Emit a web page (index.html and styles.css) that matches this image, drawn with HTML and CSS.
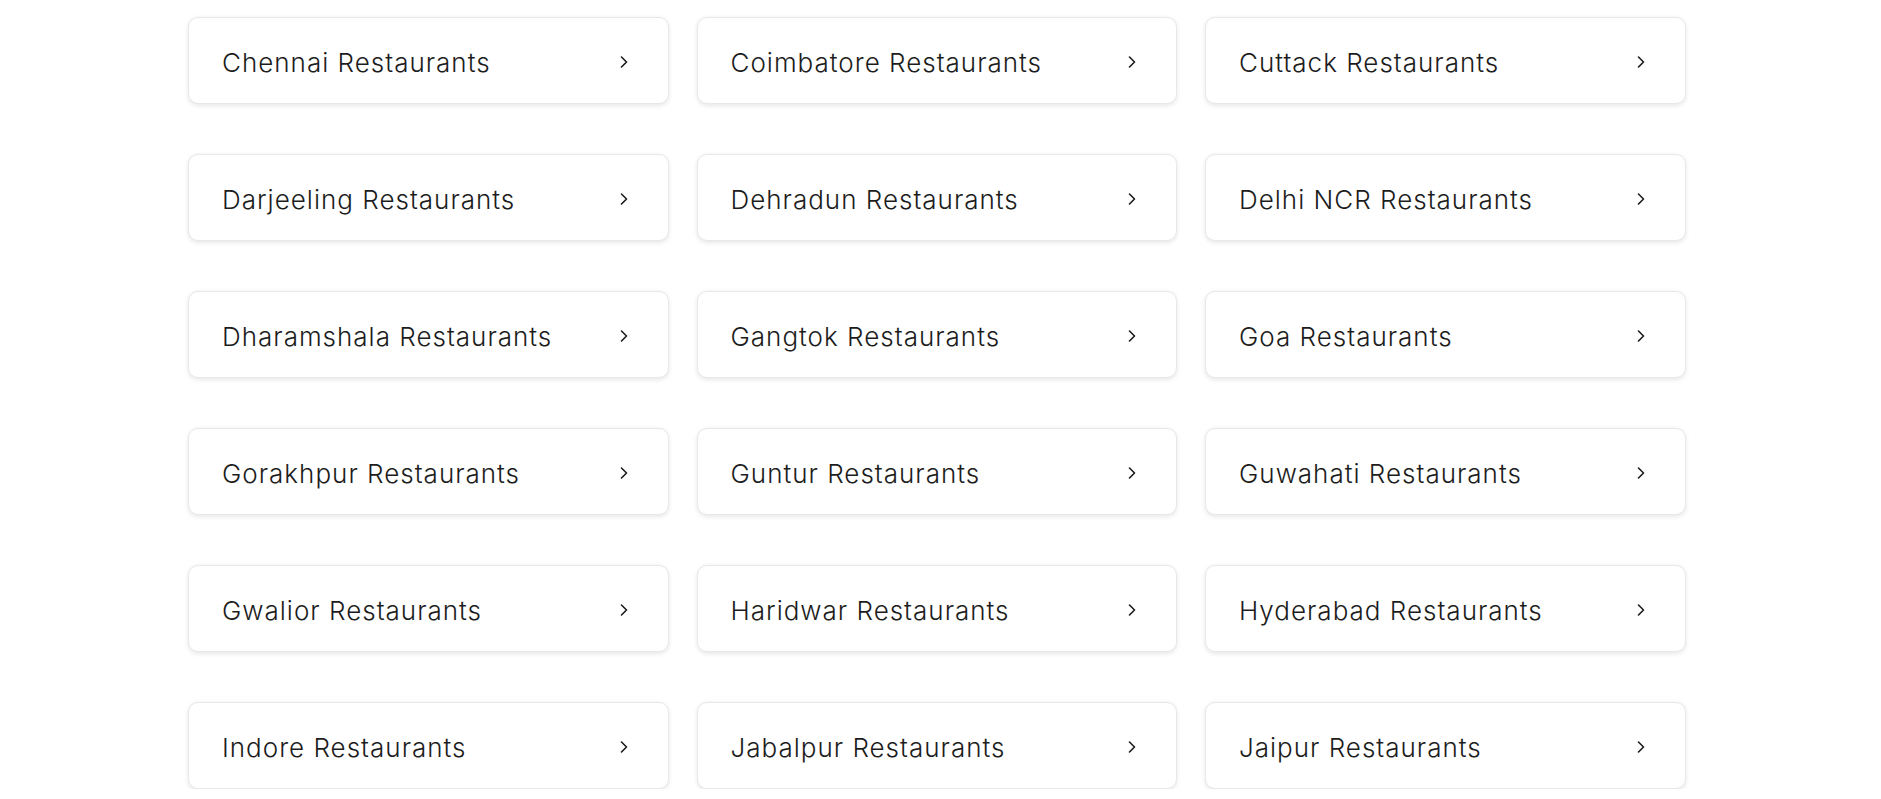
FILE: index.html
```html
<!DOCTYPE html>
<html lang="en">
<head>
<meta charset="utf-8">
<title>Restaurants</title>
<link rel="stylesheet" href="styles.css">
</head>
<body>
<div class="grid">
  <a class="card" href="#"><span class="label">Chennai Restaurants</span><svg class="chev" viewBox="0 0 8 12"><polyline points="1.5,1 6.5,6 1.5,11"/></svg></a>
  <a class="card" href="#"><span class="label">Coimbatore Restaurants</span><svg class="chev" viewBox="0 0 8 12"><polyline points="1.5,1 6.5,6 1.5,11"/></svg></a>
  <a class="card" href="#"><span class="label">Cuttack Restaurants</span><svg class="chev" viewBox="0 0 8 12"><polyline points="1.5,1 6.5,6 1.5,11"/></svg></a>
  <a class="card" href="#"><span class="label">Darjeeling Restaurants</span><svg class="chev" viewBox="0 0 8 12"><polyline points="1.5,1 6.5,6 1.5,11"/></svg></a>
  <a class="card" href="#"><span class="label">Dehradun Restaurants</span><svg class="chev" viewBox="0 0 8 12"><polyline points="1.5,1 6.5,6 1.5,11"/></svg></a>
  <a class="card" href="#"><span class="label">Delhi NCR Restaurants</span><svg class="chev" viewBox="0 0 8 12"><polyline points="1.5,1 6.5,6 1.5,11"/></svg></a>
  <a class="card" href="#"><span class="label">Dharamshala Restaurants</span><svg class="chev" viewBox="0 0 8 12"><polyline points="1.5,1 6.5,6 1.5,11"/></svg></a>
  <a class="card" href="#"><span class="label">Gangtok Restaurants</span><svg class="chev" viewBox="0 0 8 12"><polyline points="1.5,1 6.5,6 1.5,11"/></svg></a>
  <a class="card" href="#"><span class="label">Goa Restaurants</span><svg class="chev" viewBox="0 0 8 12"><polyline points="1.5,1 6.5,6 1.5,11"/></svg></a>
  <a class="card" href="#"><span class="label">Gorakhpur Restaurants</span><svg class="chev" viewBox="0 0 8 12"><polyline points="1.5,1 6.5,6 1.5,11"/></svg></a>
  <a class="card" href="#"><span class="label">Guntur Restaurants</span><svg class="chev" viewBox="0 0 8 12"><polyline points="1.5,1 6.5,6 1.5,11"/></svg></a>
  <a class="card" href="#"><span class="label">Guwahati Restaurants</span><svg class="chev" viewBox="0 0 8 12"><polyline points="1.5,1 6.5,6 1.5,11"/></svg></a>
  <a class="card" href="#"><span class="label">Gwalior Restaurants</span><svg class="chev" viewBox="0 0 8 12"><polyline points="1.5,1 6.5,6 1.5,11"/></svg></a>
  <a class="card" href="#"><span class="label">Haridwar Restaurants</span><svg class="chev" viewBox="0 0 8 12"><polyline points="1.5,1 6.5,6 1.5,11"/></svg></a>
  <a class="card" href="#"><span class="label">Hyderabad Restaurants</span><svg class="chev" viewBox="0 0 8 12"><polyline points="1.5,1 6.5,6 1.5,11"/></svg></a>
  <a class="card" href="#"><span class="label">Indore Restaurants</span><svg class="chev" viewBox="0 0 8 12"><polyline points="1.5,1 6.5,6 1.5,11"/></svg></a>
  <a class="card" href="#"><span class="label">Jabalpur Restaurants</span><svg class="chev" viewBox="0 0 8 12"><polyline points="1.5,1 6.5,6 1.5,11"/></svg></a>
  <a class="card" href="#"><span class="label">Jaipur Restaurants</span><svg class="chev" viewBox="0 0 8 12"><polyline points="1.5,1 6.5,6 1.5,11"/></svg></a>
</div>
</body>
</html>
```

FILE: styles.css
```css
html, body {
  margin: 0;
  padding: 0;
  background: #ffffff;
}

body {
  font-family: Inter, "Noto Sans", sans-serif;
  color: #1c1c1c;
  overflow: hidden;
}

.grid {
  display: grid;
  grid-template-columns: repeat(3, 480.5px);
  column-gap: 28px;
  row-gap: 50px;
  padding: 17px 0 0 188px;
}

.card {
  box-sizing: border-box;
  height: 87px;
  display: flex;
  align-items: center;
  justify-content: space-between;
  padding: 5px 40px 0 33px;
  border: 1px solid #e8e8e8;
  border-radius: 10px;
  box-shadow: 0 1.5px 4px rgba(28, 28, 28, 0.1);
  text-decoration: none;
  color: #1c1c1c;
  background: #fff;
}

.label {
  font-size: 26px;
  font-weight: 350;
  line-height: 1.2;
  letter-spacing: 1px;
}

.chev {
  width: 8px;
  height: 12px;
  margin-top: -3px;
  fill: none;
  stroke: #1c1c1c;
  stroke-width: 1.6;
  stroke-linecap: round;
  stroke-linejoin: round;
}
```
